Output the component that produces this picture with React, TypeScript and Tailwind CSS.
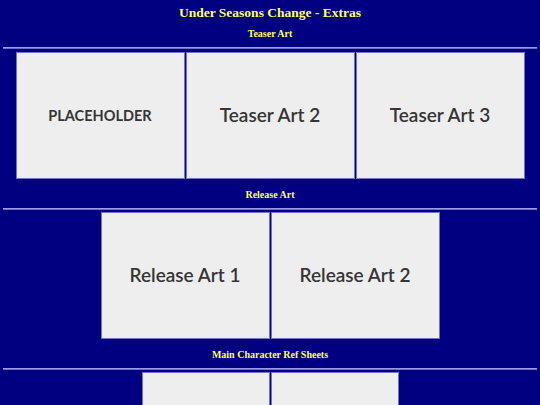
const sections = [
  { title: "Teaser Art", w: "w-[169px]", h: "h-[127px]", items: ["PLACEHOLDER", "Teaser Art 2", "Teaser Art 3"] },
  { title: "Release Art", w: "w-[169px]", h: "h-[127px]", items: ["Release Art 1", "Release Art 2"] },
  // ref sheets are still blank frames
  { title: "Main Character Ref Sheets", w: "w-[128px]", h: "h-[210px]", items: ["", ""] },
];

function ArtBox({ label, w, h }: { label: string; w: string; h: string }) {
  const caps = label !== "" && label === label.toUpperCase();
  return (
    <div
      className={`${w} ${h} shrink-0 bg-[#eeeeee] border border-[#7373c6] flex items-center justify-center font-['Lato',sans-serif] text-[#353535] ${
        caps ? "text-[14.5px] font-bold" : "text-[19px] font-semibold"
      }`}
    >
      {label}
    </div>
  );
}

export default function App() {
  return (
    <div className="min-h-screen bg-[#000080] pt-[5px] font-['Liberation_Serif',serif] text-[#ffff66]">
      <h1 className="text-center text-[13.5px] leading-[16px] font-bold">
        Under Seasons Change - Extras
      </h1>

      {sections.map((s, i) => (
        <section key={s.title} className={i === 0 ? "mt-[7px]" : "mt-[10px]"}>
          <h2 className="text-center text-[10px] leading-[12px] font-bold">{s.title}</h2>
          <div className="mt-[7px] mx-[3px] h-[2px] bg-[#6d6dc8] border-t border-[#9c9ce2]" />
          <div className={`${i === 0 ? "mt-[3px]" : "mt-[2px]"} flex justify-center gap-[1px]`}>
            {s.items.map((item, j) => (
              <ArtBox key={j} label={item} w={s.w} h={s.h} />
            ))}
          </div>
        </section>
      ))}
    </div>
  );
}
